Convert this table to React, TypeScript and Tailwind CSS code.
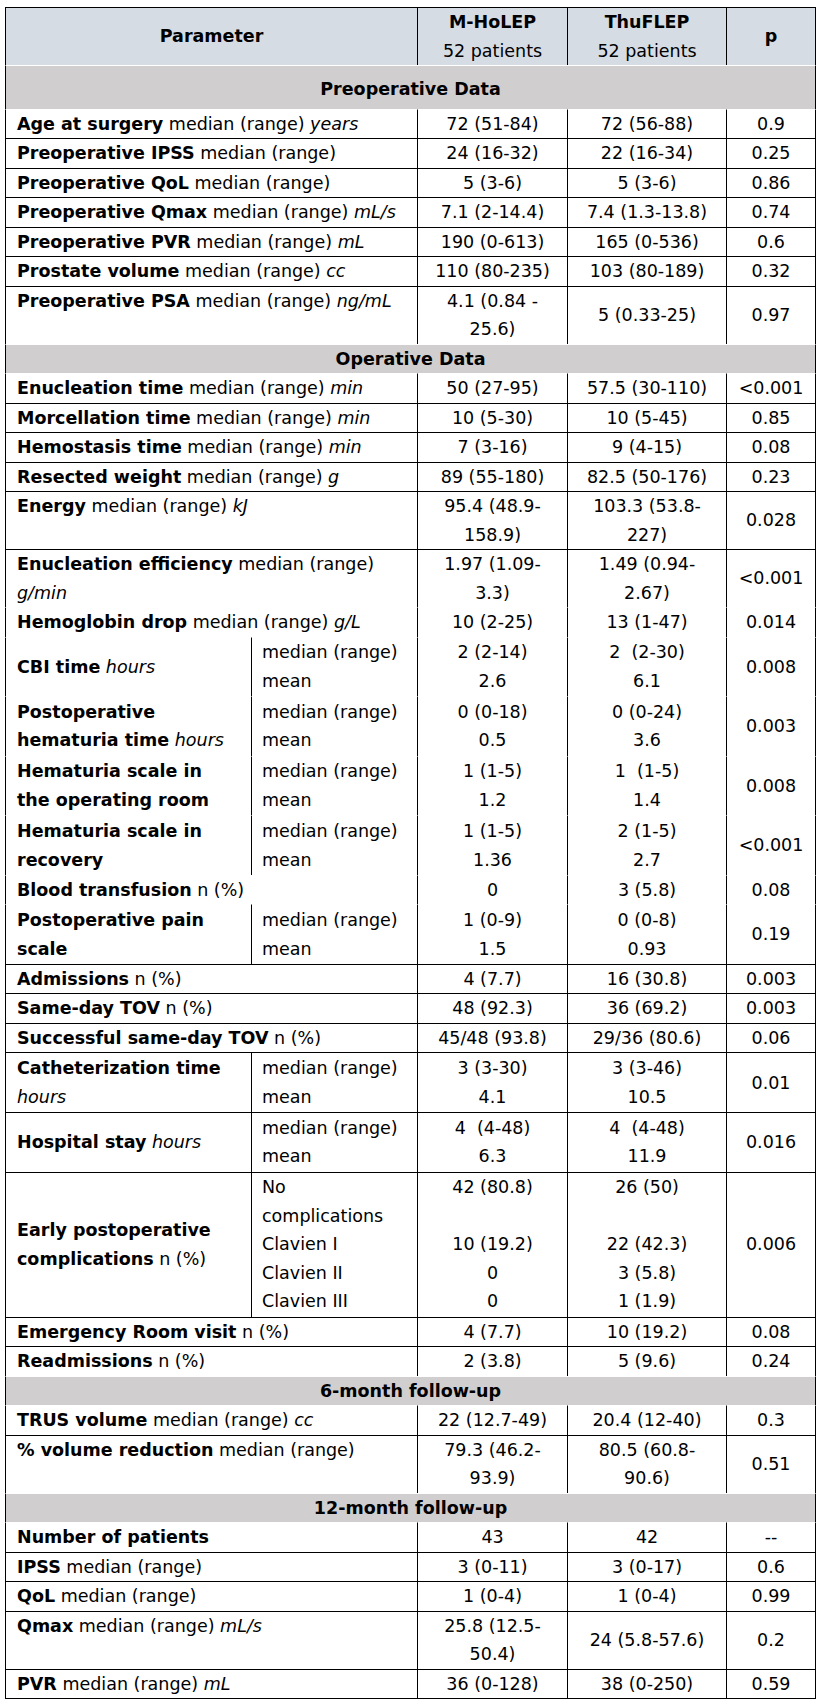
import type { ReactNode } from "react";

type Section = { kind: "section"; label: string; tall?: boolean };
type DataRow = {
  kind: "row";
  param: ReactNode[];
  sub?: string[];
  m: string[];
  t: string[];
  p: string;
  noRule?: boolean;
  middle?: boolean;
};
type Row = Section | DataRow;

const B = ({ children }: { children: ReactNode }) => <span className="font-bold">{children}</span>;
const I = ({ children }: { children: ReactNode }) => <span className="italic">{children}</span>;

const MR = "median (range)";

const rows: Row[] = [
  { kind: "section", label: "Preoperative Data", tall: true },
  { kind: "row", param: [<><B>Age at surgery</B> {MR} <I>years</I></>], m: ["72 (51-84)"], t: ["72 (56-88)"], p: "0.9" },
  { kind: "row", param: [<><B>Preoperative IPSS</B> {MR}</>], m: ["24 (16-32)"], t: ["22 (16-34)"], p: "0.25" },
  { kind: "row", param: [<><B>Preoperative QoL</B> {MR}</>], m: ["5 (3-6)"], t: ["5 (3-6)"], p: "0.86" },
  { kind: "row", param: [<><B>Preoperative Qmax</B> {MR} <I>mL/s</I></>], m: ["7.1 (2-14.4)"], t: ["7.4 (1.3-13.8)"], p: "0.74" },
  { kind: "row", param: [<><B>Preoperative PVR</B> {MR} <I>mL</I></>], m: ["190 (0-613)"], t: ["165 (0-536)"], p: "0.6" },
  { kind: "row", param: [<><B>Prostate volume</B> {MR} <I>cc</I></>], m: ["110 (80-235)"], t: ["103 (80-189)"], p: "0.32" },
  { kind: "row", param: [<><B>Preoperative PSA</B> {MR} <I>ng/mL</I></>], m: ["4.1 (0.84 -", "25.6)"], t: ["5 (0.33-25)"], p: "0.97" },

  { kind: "section", label: "Operative Data" },
  { kind: "row", param: [<><B>Enucleation time</B> {MR} <I>min</I></>], m: ["50 (27-95)"], t: ["57.5 (30-110)"], p: "<0.001" },
  { kind: "row", param: [<><B>Morcellation time</B> {MR} <I>min</I></>], m: ["10 (5-30)"], t: ["10 (5-45)"], p: "0.85" },
  { kind: "row", param: [<><B>Hemostasis time</B> {MR} <I>min</I></>], m: ["7 (3-16)"], t: ["9 (4-15)"], p: "0.08" },
  { kind: "row", param: [<><B>Resected weight</B> {MR} <I>g</I></>], m: ["89 (55-180)"], t: ["82.5 (50-176)"], p: "0.23" },
  { kind: "row", param: [<><B>Energy</B> {MR} <I>kJ</I></>], m: ["95.4 (48.9-", "158.9)"], t: ["103.3 (53.8-", "227)"], p: "0.028" },
  { kind: "row", param: [<><B>Enucleation efficiency</B> {MR}</>, <I>g/min</I>], m: ["1.97 (1.09-", "3.3)"], t: ["1.49 (0.94-", "2.67)"], p: "<0.001" },
  { kind: "row", param: [<><B>Hemoglobin drop</B> {MR} <I>g/L</I></>], m: ["10 (2-25)"], t: ["13 (1-47)"], p: "0.014", noRule: true },
  { kind: "row", param: [<><B>CBI time</B> <I>hours</I></>], sub: [MR, "mean"], m: ["2 (2-14)", "2.6"], t: ["2  (2-30)", "6.1"], p: "0.008", noRule: true, middle: true },
  { kind: "row", param: [<B>Postoperative</B>, <><B>hematuria time</B> <I>hours</I></>], sub: [MR, "mean"], m: ["0 (0-18)", "0.5"], t: ["0 (0-24)", "3.6"], p: "0.003", noRule: true, middle: true },
  { kind: "row", param: [<B>Hematuria scale in</B>, <B>the operating room</B>], sub: [MR, "mean"], m: ["1 (1-5)", "1.2"], t: ["1  (1-5)", "1.4"], p: "0.008", noRule: true, middle: true },
  { kind: "row", param: [<B>Hematuria scale in</B>, <B>recovery</B>], sub: [MR, "mean"], m: ["1 (1-5)", "1.36"], t: ["2 (1-5)", "2.7"], p: "<0.001", noRule: true, middle: true },
  { kind: "row", param: [<><B>Blood transfusion</B> n (%)</>], m: ["0"], t: ["3 (5.8)"], p: "0.08", noRule: true },
  { kind: "row", param: [<B>Postoperative pain</B>, <B>scale</B>], sub: [MR, "mean"], m: ["1 (0-9)", "1.5"], t: ["0 (0-8)", "0.93"], p: "0.19", noRule: true, middle: true },
  { kind: "row", param: [<><B>Admissions</B> n (%)</>], m: ["4 (7.7)"], t: ["16 (30.8)"], p: "0.003" },
  { kind: "row", param: [<><B>Same-day TOV</B> n (%)</>], m: ["48 (92.3)"], t: ["36 (69.2)"], p: "0.003" },
  { kind: "row", param: [<><B>Successful same-day TOV</B> n (%)</>], m: ["45/48 (93.8)"], t: ["29/36 (80.6)"], p: "0.06" },
  { kind: "row", param: [<B>Catheterization time</B>, <I>hours</I>], sub: [MR, "mean"], m: ["3 (3-30)", "4.1"], t: ["3 (3-46)", "10.5"], p: "0.01", middle: true },
  { kind: "row", param: [<><B>Hospital stay</B> <I>hours</I></>], sub: [MR, "mean"], m: ["4  (4-48)", "6.3"], t: ["4  (4-48)", "11.9"], p: "0.016", middle: true },
  {
    kind: "row",
    param: [<B>Early postoperative</B>, <><B>complications</B> n (%)</>],
    sub: ["No", "complications", "Clavien I", "Clavien II", "Clavien III"],
    m: ["42 (80.8)", "", "10 (19.2)", "0", "0"],
    t: ["26 (50)", "", "22 (42.3)", "3 (5.8)", "1 (1.9)"],
    p: "0.006",
    middle: true,
  },
  { kind: "row", param: [<><B>Emergency Room visit</B> n (%)</>], m: ["4 (7.7)"], t: ["10 (19.2)"], p: "0.08" },
  { kind: "row", param: [<><B>Readmissions</B> n (%)</>], m: ["2 (3.8)"], t: ["5 (9.6)"], p: "0.24" },

  { kind: "section", label: "6-month follow-up" },
  { kind: "row", param: [<><B>TRUS volume</B> {MR} <I>cc</I></>], m: ["22 (12.7-49)"], t: ["20.4 (12-40)"], p: "0.3" },
  { kind: "row", param: [<><B>% volume reduction</B> {MR}</>], m: ["79.3 (46.2-", "93.9)"], t: ["80.5 (60.8-", "90.6)"], p: "0.51" },

  { kind: "section", label: "12-month follow-up" },
  { kind: "row", param: [<B>Number of patients</B>], m: ["43"], t: ["42"], p: "--" },
  { kind: "row", param: [<><B>IPSS</B> {MR}</>], m: ["3 (0-11)"], t: ["3 (0-17)"], p: "0.6" },
  { kind: "row", param: [<><B>QoL</B> {MR}</>], m: ["1 (0-4)"], t: ["1 (0-4)"], p: "0.99" },
  { kind: "row", param: [<><B>Qmax</B> {MR} <I>mL/s</I></>], m: ["25.8 (12.5-", "50.4)"], t: ["24 (5.8-57.6)"], p: "0.2" },
  { kind: "row", param: [<><B>PVR</B> {MR} <I>mL</I></>], m: ["36 (0-128)"], t: ["38 (0-250)"], p: "0.59" },
];

function Lines({ items }: { items: ReactNode[] }) {
  return (
    <>
      {items.map((it, i) => (
        <div key={i} className="whitespace-pre">
          {it === "" ? "\u00a0" : it}
        </div>
      ))}
    </>
  );
}

export default function App() {
  return (
    <div className="bg-white min-h-screen pt-[7px] pl-[5px] text-black font-['DejaVu_Sans',sans-serif] text-[17.5px] leading-[28.5px]">
      <table className="border-separate border-spacing-0 table-fixed w-[811px] border-b border-black">
        <colgroup>
          <col className="w-[246px]" />
          <col className="w-[166px]" />
          <col className="w-[150px]" />
          <col className="w-[159px]" />
          <col className="w-[90px]" />
        </colgroup>
        <tbody>
          {/* HEADER */}
          <tr className="bg-[#d6dce4]">
            <td colSpan={2} className="border-t border-l border-black text-center align-middle font-bold px-[10px]">
              Parameter
            </td>
            <td className="border-t border-l border-black text-center align-middle px-[4px]">
              <div className="font-bold">M-HoLEP</div>
              <div>52 patients</div>
            </td>
            <td className="border-t border-l border-black text-center align-middle px-[4px]">
              <div className="font-bold">ThuFLEP</div>
              <div>52 patients</div>
            </td>
            <td className="border-t border-l border-r border-black text-center align-middle font-bold">p</td>
          </tr>

          {rows.map((r, idx) => {
            if (r.kind === "section") {
              return (
                <tr key={idx} className="bg-[#d0cece]">
                  <td
                    colSpan={5}
                    className={`border-t border-t-white border-l border-r border-black text-center font-bold ${
                      r.tall ? "pt-[9px] pb-[5px]" : ""
                    }`}
                  >
                    {r.label}
                  </td>
                </tr>
              );
            }
            const prevSection = idx > 0 && rows[idx - 1].kind === "section";
            const rule = r.noRule || prevSection ? "border-t-white" : "border-t-black";
            // split rows (median / mean) sit a little looser than plain rows
            const pad = r.sub ? "py-[0.8px]" : "";
            const cell = `border-t border-l border-black ${rule} ${pad}`;
            return (
              <tr key={idx}>
                {r.sub ? (
                  <>
                    <td className={`${cell} align-middle pl-[11px] pr-[6px]`}>
                      <Lines items={r.param} />
                    </td>
                    <td className={`${cell} align-middle pl-[10px] pr-[4px]`}>
                      <Lines items={r.sub} />
                    </td>
                  </>
                ) : (
                  <td colSpan={2} className={`${cell} ${r.middle ? "align-middle" : "align-top"} pl-[11px] pr-[6px]`}>
                    <Lines items={r.param} />
                  </td>
                )}
                <td className={`${cell} align-middle text-center px-[4px]`}>
                  <Lines items={r.m} />
                </td>
                <td className={`${cell} align-middle text-center px-[4px]`}>
                  <Lines items={r.t} />
                </td>
                <td className={`${cell} border-r align-middle text-center`}>{r.p}</td>
              </tr>
            );
          })}
        </tbody>
      </table>
    </div>
  );
}
